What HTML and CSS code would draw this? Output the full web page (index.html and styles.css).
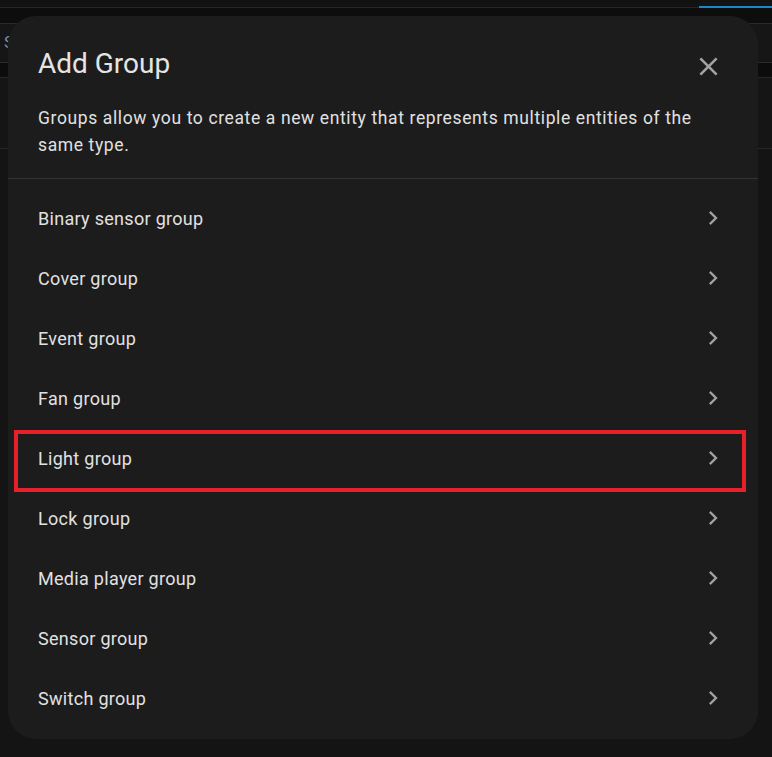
FILE: index.html
```html
<!DOCTYPE html>
<html>
<head>
<meta charset="utf-8">
<link rel="stylesheet" href="styles.css">
</head>
<body>
<div class="page">
  <div class="bar bar-top"><span class="tab-indicator"></span></div>
  <div class="bar bar-dark"></div>
  <div class="bar bar-search"><span class="search-letter">S</span></div>
  <div class="bar bar-dark2"></div>
  <div class="bar bar-mid"></div>
  <div class="page-rest"></div>
</div>

<div class="dialog">
  <div class="dialog-header">
    <h2 class="dialog-title">Add Group</h2>
    <button class="close-btn" aria-label="Close">
      <svg viewBox="0 0 24 24" width="31" height="31"><path d="M19,6.41L17.59,5L12,10.59L6.41,5L5,6.41L10.59,12L5,17.59L6.41,19L12,13.41L17.59,19L19,17.59L13.41,12L19,6.41Z"/></svg>
    </button>
  </div>
  <p class="dialog-desc">Groups allow you to create a new entity that represents multiple entities of the same type.</p>
  <div class="divider"></div>
  <ul class="group-list">
    <li class="group-item"><span>Binary sensor group</span><svg class="chev" viewBox="0 0 24 24"><path d="M8.59,16.58L13.17,12L8.59,7.41L10,6L16,12L10,18L8.59,16.58Z"/></svg></li>
    <li class="group-item"><span>Cover group</span><svg class="chev" viewBox="0 0 24 24"><path d="M8.59,16.58L13.17,12L8.59,7.41L10,6L16,12L10,18L8.59,16.58Z"/></svg></li>
    <li class="group-item"><span>Event group</span><svg class="chev" viewBox="0 0 24 24"><path d="M8.59,16.58L13.17,12L8.59,7.41L10,6L16,12L10,18L8.59,16.58Z"/></svg></li>
    <li class="group-item"><span>Fan group</span><svg class="chev" viewBox="0 0 24 24"><path d="M8.59,16.58L13.17,12L8.59,7.41L10,6L16,12L10,18L8.59,16.58Z"/></svg></li>
    <li class="group-item highlighted"><span>Light group</span><svg class="chev" viewBox="0 0 24 24"><path d="M8.59,16.58L13.17,12L8.59,7.41L10,6L16,12L10,18L8.59,16.58Z"/></svg></li>
    <li class="group-item"><span>Lock group</span><svg class="chev" viewBox="0 0 24 24"><path d="M8.59,16.58L13.17,12L8.59,7.41L10,6L16,12L10,18L8.59,16.58Z"/></svg></li>
    <li class="group-item"><span>Media player group</span><svg class="chev" viewBox="0 0 24 24"><path d="M8.59,16.58L13.17,12L8.59,7.41L10,6L16,12L10,18L8.59,16.58Z"/></svg></li>
    <li class="group-item"><span>Sensor group</span><svg class="chev" viewBox="0 0 24 24"><path d="M8.59,16.58L13.17,12L8.59,7.41L10,6L16,12L10,18L8.59,16.58Z"/></svg></li>
    <li class="group-item"><span>Switch group</span><svg class="chev" viewBox="0 0 24 24"><path d="M8.59,16.58L13.17,12L8.59,7.41L10,6L16,12L10,18L8.59,16.58Z"/></svg></li>
  </ul>
</div>
</body>
</html>
```

FILE: styles.css
```css
* { box-sizing: border-box; }
html, body {
  margin: 0;
  padding: 0;
  height: 100%;
  background: #141414;
  font-family: Roboto, "Liberation Sans", sans-serif;
  overflow: hidden;
}
.page {
  display: flex;
  flex-direction: column;
  height: 757px;
}
.bar { width: 100%; }
.bar-top {
  height: 8px;
  background: #121212;
  border-bottom: 1px solid #262626;
  position: relative;
}
.tab-indicator {
  position: absolute;
  right: 0;
  bottom: -1px;
  width: 73px;
  height: 2px;
  background: #1a87c9;
}
.bar-dark {
  height: 16px;
  background: #0d0d0d;
  border-bottom: 1px solid #2a2a2a;
}
.bar-search {
  height: 39px;
  background: #161616;
  border-bottom: 1px solid #2a2a2a;
  padding-left: 4px;
  color: #6f8fa8;
  font-size: 17px;
  line-height: 36px;
}
.bar-dark2 {
  height: 15px;
  background: #0c0c0c;
  border-bottom: 1px solid #262626;
}
.bar-mid {
  height: 71px;
  background: #151515;
  border-bottom: 1px solid #262626;
}
.page-rest {
  flex: 1;
  background: #141414;
}

.dialog {
  position: absolute;
  left: 8px;
  top: 16px;
  width: 750px;
  height: 723px;
  background: #1c1c1c;
  border-radius: 28px;
  display: flex;
  flex-direction: column;
  color: #e1e1e1;
}
.dialog-header {
  display: flex;
  align-items: center;
  justify-content: space-between;
  padding: 30px 34px 0 30px;
  height: 66px;
}
.dialog-title {
  margin: 0;
  font-size: 28px;
  font-weight: 400;
  line-height: 36px;
  color: #e4e4e4;
}
.close-btn {
  background: none;
  border: none;
  padding: 0;
  width: 31px;
  height: 31px;
  display: flex;
  fill: #a3a3a3;
  margin-top: 4px;
}
.dialog-desc {
  margin: 23px 60px 19px 30px;
  font-size: 17.5px;
  letter-spacing: 0.62px;
  line-height: 27px;
  color: #e1e1e1;
}
.divider {
  height: 1px;
  background: #333333;
}
.group-list {
  list-style: none;
  margin: 0;
  padding: 9px 0;
}
.group-item {
  position: relative;
  height: 60px;
  display: flex;
  align-items: center;
  justify-content: space-between;
  padding: 0 31px 0 30px;
  font-size: 18px;
  letter-spacing: 0.3px;
  color: #e1e1e1;
}
.chev {
  width: 28px;
  height: 28px;
  fill: #a0a0a0;
}
.highlighted::after {
  content: "";
  position: absolute;
  left: 6px;
  right: 12px;
  top: 2px;
  bottom: -4px;
  border: 4px solid #e8202a;
}
```
